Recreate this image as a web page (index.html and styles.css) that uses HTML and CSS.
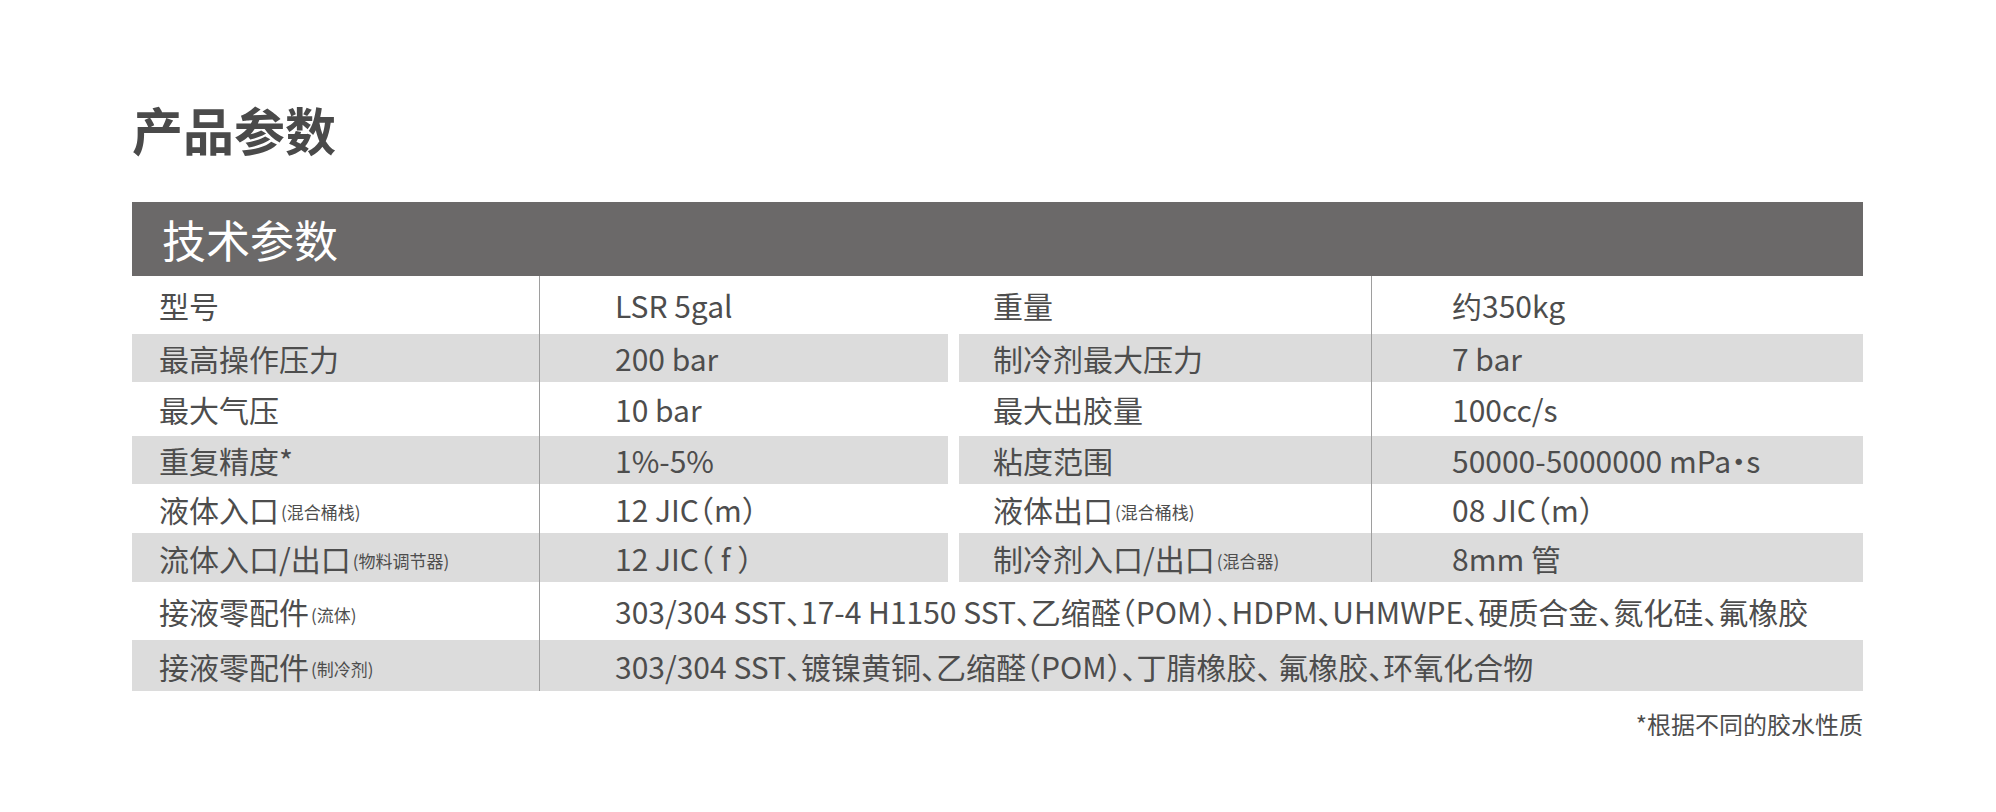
FILE: index.html
```html
<!DOCTYPE html>
<html lang="zh-CN">
<head>
<meta charset="utf-8">
<title>产品参数</title>
<link rel="stylesheet" href="styles.css">
</head>
<body>
<main class="page">
  <h1 class="title">产品参数</h1>
  <div class="bar">技术参数</div>
  <div class="specs">
    <div class="row h58">
      <div class="half left"><div class="k">型号</div><div class="v">LSR 5gal</div></div>
      <div class="half right"><div class="k">重量</div><div class="v">约350kg</div></div>
    </div>
    <div class="row h48 alt">
      <div class="half left"><div class="k">最高操作压力</div><div class="v">200 bar</div></div>
      <div class="half right"><div class="k">制冷剂最大压力</div><div class="v">7 bar</div></div>
    </div>
    <div class="row h54">
      <div class="half left"><div class="k">最大气压</div><div class="v">10 bar</div></div>
      <div class="half right"><div class="k">最大出胶量</div><div class="v">100cc/s</div></div>
    </div>
    <div class="row h48 alt">
      <div class="half left"><div class="k">重复精度*</div><div class="v">1%-5%</div></div>
      <div class="half right"><div class="k">粘度范围</div><div class="v">50000-5000000 mPa·s</div></div>
    </div>
    <div class="row h49">
      <div class="half left"><div class="k">液体入口<span class="sub">(混合桶栈)</span></div><div class="v">12 JIC（m）</div></div>
      <div class="half right"><div class="k">液体出口<span class="sub">(混合桶栈)</span></div><div class="v">08 JIC（m）</div></div>
    </div>
    <div class="row h49 alt">
      <div class="half left"><div class="k">流体入口/出口<span class="sub">(物料调节器)</span></div><div class="v">12 JIC（ f ）</div></div>
      <div class="half right"><div class="k">制冷剂入口/出口<span class="sub">(混合器)</span></div><div class="v">8mm 管</div></div>
    </div>
    <div class="row full h58">
      <div class="k">接液零配件<span class="sub">(流体)</span></div>
      <div class="v">303/304 SST、17-4 H1150 SST、乙缩醛（POM）、HDPM、UHMWPE、硬质合金、氮化硅、氟橡胶</div>
    </div>
    <div class="row full h51 alt">
      <div class="k">接液零配件<span class="sub">(制冷剂)</span></div>
      <div class="v">303/304 SST、镀镍黄铜、乙缩醛（POM）、丁腈橡胶、 氟橡胶、环氧化合物</div>
    </div>
  </div>
  <p class="note">*根据不同的胶水性质</p>
</main>
</body>
</html>
```

FILE: styles.css
```css
* { box-sizing: border-box; }
html, body { margin: 0; padding: 0; background: #ffffff; }
body {
  font-family: "Noto Sans CJK SC", "Noto Sans", sans-serif;
  color: #4d4d4d;
}
.page {
  width: 1731px;
  margin-left: 132px;
  padding-top: 104px;
}
.title {
  margin: 0 0 48px 0;
  font-size: 51px;
  line-height: 50px;
  font-weight: 700;
  color: #4a4a4a;
}
.bar {
  height: 74px;
  background: #6b6969;
  color: #ffffff;
  font-size: 44px;
  line-height: 1;
  padding-left: 30px;
  display: flex;
  align-items: center;
}
.specs {
  display: flex;
  flex-direction: column;
  font-size: 30px;
  line-height: 1;
  font-feature-settings: "halt" 1;
}
.row {
  display: grid;
  grid-template-columns: 816px 904px;
  column-gap: 11px;
}
.h58 { height: 58px; }
.h54 { height: 54px; }
.h51 { height: 51px; }
.h49 { height: 49px; }
.h48 { height: 48px; }
.half {
  display: grid;
}
.half.left { grid-template-columns: 408px 1fr; }
.half.right { grid-template-columns: 413px 1fr; }
.alt .half { background: #dcdcdc; }
.row.full {
  grid-template-columns: 408px 1fr;
  column-gap: 0;
}
.row.full.alt { background: #dcdcdc; }
.k, .v {
  display: flex;
  align-items: center;
  white-space: pre;
}
.k {
  border-right: 1px solid #9e9e9e;
}
.left .k, .full .k { padding-left: 27px; }
.right .k { padding-left: 34px; }
.left .v, .full .v { padding-left: 75px; }
.right .v { padding-left: 80px; }
.sub {
  font-size: 17px;
  margin-left: 2px;
  position: relative;
  top: 3px;
}
.note {
  margin: 21px 0 0 0;
  text-align: right;
  font-size: 24px;
  line-height: 1;
}
```
